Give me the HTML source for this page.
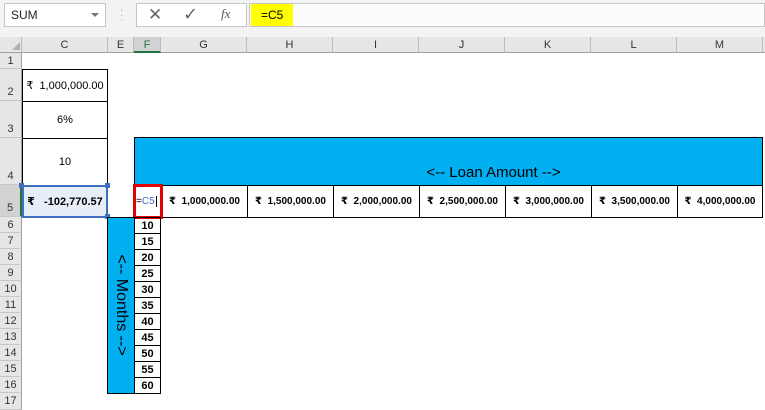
<!DOCTYPE html>
<html><head><style>
*{margin:0;padding:0;box-sizing:border-box}
body{width:765px;height:410px;background:#fff;position:relative;overflow:hidden;font-family:"Liberation Sans","DejaVu Sans",sans-serif;font-size:11px;color:#000}
.a{position:absolute}
.ch{position:absolute;top:37px;height:16px;background:#e6e6e6;border-right:1px solid #bdbdbd;border-bottom:1px solid #a0a0a0;text-align:center;line-height:16px;font-size:11px;color:#333}
.rh{position:absolute;left:0;width:22px;background:#e6e6e6;border-bottom:1px solid #c8c8c8;border-right:1px solid #a0a0a0;font-size:11px;color:#333;text-align:center}
.cell{position:absolute;border:1px solid #000;display:flex;align-items:center;justify-content:center;font-size:10px}
.c11{font-size:11px}
.b{font-weight:bold}
</style></head><body>
<div class="a" style="left:0;top:0;width:765px;height:37px;background:#f3f3f3"></div>
<div class="a" style="left:4px;top:3px;width:102px;height:24px;background:#fff;border:1px solid #c6c6c6;font-size:12px;line-height:22px;padding-left:6px;color:#222">SUM</div>
<div class="a" style="left:91px;top:13px;width:0;height:0;border-left:4px solid transparent;border-right:4px solid transparent;border-top:4px solid #777"></div>
<div class="a" style="left:120px;top:8px;color:#aaa;font-size:10px;line-height:5px">·<br>·<br>·</div>
<div class="a" style="left:136px;top:3px;width:111px;height:24px;background:#fff;border:1px solid #c6c6c6"></div>
<div class="a" style="left:148px;top:5px;font-size:17px;color:#666">✕</div>
<div class="a" style="left:183px;top:4px;font-size:18px;color:#666">✓</div>
<div class="a" style="left:221px;top:6px;font-size:13px;color:#555;font-style:italic;font-family:'Liberation Serif',serif">fx</div>
<div class="a" style="left:249px;top:3px;width:516px;height:24px;background:#fcfcfc;border:1px solid #c6c6c6"></div>
<div class="a" style="left:251px;top:4px;width:42px;height:22px;background:#ffff00;font-size:12px;line-height:22px;padding-left:10px">=C5</div>
<div class="a" style="left:0;top:37px;width:765px;height:16px;background:#e6e6e6;border-bottom:1px solid #a0a0a0"></div>
<div class="ch" style="left:0;width:22px"></div>
<div class="a" style="left:12px;top:42px;width:0;height:0;border-left:8px solid transparent;border-bottom:8px solid #b0b0b0"></div>
<div class="ch" style="left:22px;width:86px">C</div>
<div class="ch" style="left:108px;width:26px">E</div>
<div class="ch" style="left:134px;width:27px;background:#d2d2d2;border-bottom:2px solid #217346;color:#217346">F</div>
<div class="ch" style="left:161px;width:86px">G</div>
<div class="ch" style="left:247px;width:86px">H</div>
<div class="ch" style="left:333px;width:86px">I</div>
<div class="ch" style="left:419px;width:86px">J</div>
<div class="ch" style="left:505px;width:86px">K</div>
<div class="ch" style="left:591px;width:86px">L</div>
<div class="ch" style="left:677px;width:86px">M</div>
<div class="rh" style="top:53px;height:16px;line-height:16px">1</div>
<div class="rh" style="top:69px;height:32px;line-height:46px">2</div>
<div class="rh" style="top:101px;height:37px;line-height:56px">3</div>
<div class="rh" style="top:138px;height:47px;line-height:76px">4</div>
<div class="rh" style="top:185px;height:32px;line-height:46px;background:#d2d2d2;border-right:2px solid #217346">5</div>
<div class="rh" style="top:217px;height:16px;line-height:16px">6</div>
<div class="rh" style="top:233px;height:16px;line-height:16px">7</div>
<div class="rh" style="top:249px;height:16px;line-height:16px">8</div>
<div class="rh" style="top:265px;height:16px;line-height:16px">9</div>
<div class="rh" style="top:281px;height:16px;line-height:16px">10</div>
<div class="rh" style="top:297px;height:16px;line-height:16px">11</div>
<div class="rh" style="top:313px;height:16px;line-height:16px">12</div>
<div class="rh" style="top:329px;height:16px;line-height:16px">13</div>
<div class="rh" style="top:345px;height:16px;line-height:16px">14</div>
<div class="rh" style="top:361px;height:16px;line-height:16px">15</div>
<div class="rh" style="top:377px;height:16px;line-height:16px">16</div>
<div class="rh" style="top:393px;height:17px;line-height:16px">17</div>
<div class="cell c11" style="left:22px;top:69px;width:86px;height:33px">₹&nbsp; 1,000,000.00</div>
<div class="cell c11" style="left:22px;top:101px;width:86px;height:38px;border-top:none">6%</div>
<div class="cell c11" style="left:22px;top:138px;width:86px;height:48px;border-top:none">10</div>
<div class="cell b c11" style="left:22px;top:185px;width:86px;height:33px;border:2px solid #3f6fc2;background:#e8eef8">₹&nbsp;&nbsp; -102,770.57</div>
<div class="a" style="left:19px;top:183px;width:5px;height:5px;background:#3f6fc2"></div>
<div class="a" style="left:105px;top:183px;width:5px;height:5px;background:#3f6fc2"></div>
<div class="a" style="left:105px;top:214px;width:5px;height:5px;background:#3f6fc2"></div>
<div class="a" style="left:134px;top:137px;width:629px;height:49px;background:#00b0f0;border:1px solid #000;font-size:15px;text-align:center;padding-top:26px;padding-left:90px">&lt;-- Loan Amount --&gt;</div>
<div class="cell b" style="left:161px;top:185px;width:87px;height:33px">₹&nbsp; 1,000,000.00</div>
<div class="cell b" style="left:247px;top:185px;width:87px;height:33px">₹&nbsp; 1,500,000.00</div>
<div class="cell b" style="left:333px;top:185px;width:87px;height:33px">₹&nbsp; 2,000,000.00</div>
<div class="cell b" style="left:419px;top:185px;width:87px;height:33px">₹&nbsp; 2,500,000.00</div>
<div class="cell b" style="left:505px;top:185px;width:87px;height:33px">₹&nbsp; 3,000,000.00</div>
<div class="cell b" style="left:591px;top:185px;width:87px;height:33px">₹&nbsp; 3,500,000.00</div>
<div class="cell b" style="left:677px;top:185px;width:86px;height:33px">₹&nbsp; 4,000,000.00</div>
<div class="a" style="left:133px;top:184px;width:30px;height:35px;border:3px solid #e00000;background:#fff;font-size:10px;line-height:29px"><span>=</span><span style="color:#3f6fc2">C5</span><span style="border-left:1px solid #000;margin-left:1px"></span></div>
<div class="a" style="left:107px;top:217px;width:28px;height:177px;background:#00b0f0;border:1px solid #000"></div>
<div class="a" style="left:121px;top:305px;transform:translate(-50%,-50%) rotate(90deg);font-size:16px;white-space:nowrap">&lt;-- Months --&gt;</div>
<div class="a" style="left:134px;top:217px;width:27px">
<div class="cell b c11" style="position:relative;width:27px;height:17px">10</div>
<div class="cell b c11" style="position:relative;width:27px;height:17px;margin-top:-1px">15</div>
<div class="cell b c11" style="position:relative;width:27px;height:17px;margin-top:-1px">20</div>
<div class="cell b c11" style="position:relative;width:27px;height:17px;margin-top:-1px">25</div>
<div class="cell b c11" style="position:relative;width:27px;height:17px;margin-top:-1px">30</div>
<div class="cell b c11" style="position:relative;width:27px;height:17px;margin-top:-1px">35</div>
<div class="cell b c11" style="position:relative;width:27px;height:17px;margin-top:-1px">40</div>
<div class="cell b c11" style="position:relative;width:27px;height:17px;margin-top:-1px">45</div>
<div class="cell b c11" style="position:relative;width:27px;height:17px;margin-top:-1px">50</div>
<div class="cell b c11" style="position:relative;width:27px;height:17px;margin-top:-1px">55</div>
<div class="cell b c11" style="position:relative;width:27px;height:17px;margin-top:-1px">60</div>
</div>
</body></html>
